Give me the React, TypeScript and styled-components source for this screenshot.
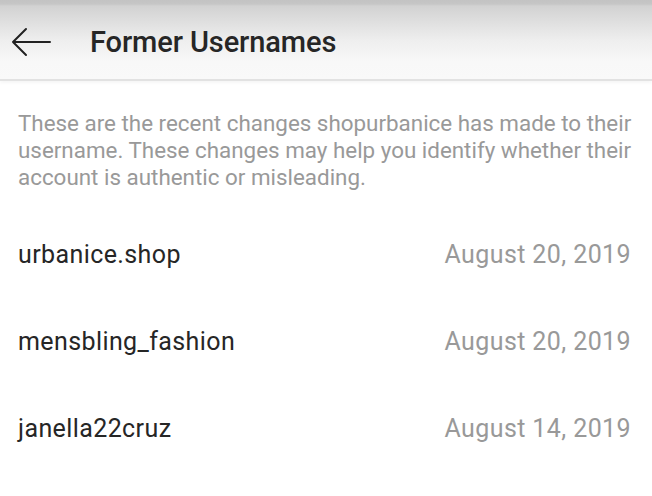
import React from 'react';
import styled, { createGlobalStyle } from 'styled-components';

type Change = {
    username: string;
    date: string;
};

const changes: Change[] = [
    { username: 'urbanice.shop', date: 'August 20, 2019' },
    { username: 'mensbling_fashion', date: 'August 20, 2019' },
    { username: 'janella22cruz', date: 'August 14, 2019' },
];

const BackArrow = () => (
    <svg width="40" height="30" viewBox="0 0 40 30" fill="none">
        <path d="M2 15H39M15 2L2 15L15 28" stroke="#222" strokeWidth="2" strokeLinecap="round" strokeLinejoin="round" />
    </svg>
);

const App = () => {
    return (
        <StPage>
            <GlobalStyle />
            <StHeader>
                <StBackBtn type="button" aria-label="Back">
                    <BackArrow />
                </StBackBtn>
                <StTitle>Former Usernames</StTitle>
            </StHeader>
            <StIntro>
                These are the recent changes shopurbanice has made to their username. These changes may help
                you identify whether their account is authentic or misleading.
            </StIntro>
            <StList>
                {changes.map((c) => (
                    <StRow key={c.username}>
                        <StName>{c.username}</StName>
                        <StDate>{c.date}</StDate>
                    </StRow>
                ))}
            </StList>
        </StPage>
    );
};

export default App;

const GlobalStyle = createGlobalStyle`
    body {
        margin: 0;
        background: #fff;
        font-family: Roboto, "Liberation Sans", sans-serif;
    }
`;
const StPage = styled.div`
    width: 652px;
    min-height: 496px;
    background: #fff;
`;
const StHeader = styled.header`
    height: 81px;
    display: flex;
    align-items: center;
    gap: 39px;
    padding: 0 0 0 11px;
    box-sizing: border-box;
    background: linear-gradient(#c3c3c3 0, #c6c6c6 4px, #d2d2d2 6px, #eeeeee 40px, #f8f8f8 62px, #f9f9f9 100%);
    border-bottom: 2px solid #e2e2e2;
    box-shadow: 0 2px 3px rgba(0, 0, 0, 0.04);
`;
const StBackBtn = styled.button`
    border: 0;
    background: none;
    padding: 0;
    display: flex;
    margin-top: 4px;
`;
const StTitle = styled.h1`
    margin: 4px 0 0;
    font-size: 29px;
    font-weight: 500;
    color: #262626;
    letter-spacing: -0.1px;
`;
const StIntro = styled.p`
    margin: 0;
    padding: 29px 16px 0 18px;
    font-size: 22.4px;
    line-height: 27px;
    color: #999;
`;
const StList = styled.ul`
    list-style: none;
    margin: 0;
    padding: 20px 21px 0 18px;
`;
const StRow = styled.li`
    display: flex;
    justify-content: space-between;
    align-items: center;
    height: 87px;
    font-size: 25px;
    letter-spacing: 0.4px;
`;
const StName = styled.span`
    color: #262626;
`;
const StDate = styled.span`
    color: #999;
`;
